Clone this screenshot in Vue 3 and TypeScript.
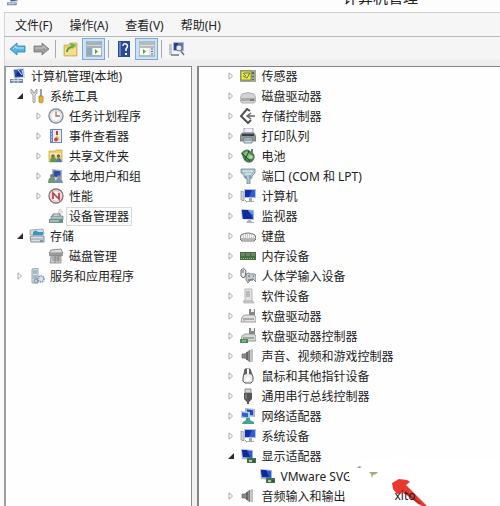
<script setup lang="ts">
interface Row {
  icon: string
  label: string
  level: number
  state?: 'open' | 'closed'
  selected?: boolean
}

const menus: string[] = ['文件(F)', '操作(A)', '查看(V)', '帮助(H)']

const consoleTree: Row[] = [
  { icon: 'console', label: '计算机管理(本地)', level: 0 },
  { icon: 'tools', label: '系统工具', level: 1, state: 'open' },
  { icon: 'clock', label: '任务计划程序', level: 2, state: 'closed' },
  { icon: 'event', label: '事件查看器', level: 2, state: 'closed' },
  { icon: 'shared', label: '共享文件夹', level: 2, state: 'closed' },
  { icon: 'users', label: '本地用户和组', level: 2, state: 'closed' },
  { icon: 'perf', label: '性能', level: 2, state: 'closed' },
  { icon: 'device', label: '设备管理器', level: 2, selected: true },
  { icon: 'storage', label: '存储', level: 1, state: 'open' },
  { icon: 'disk', label: '磁盘管理', level: 2 },
  { icon: 'services', label: '服务和应用程序', level: 1, state: 'closed' },
]

const deviceTree: Row[] = [
  { icon: 'sensor', label: '传感器', level: 1, state: 'closed' },
  { icon: 'drive', label: '磁盘驱动器', level: 1, state: 'closed' },
  { icon: 'controller', label: '存储控制器', level: 1, state: 'closed' },
  { icon: 'printer', label: '打印队列', level: 1, state: 'closed' },
  { icon: 'battery', label: '电池', level: 1, state: 'closed' },
  { icon: 'port', label: '端口 (COM 和 LPT)', level: 1, state: 'closed' },
  { icon: 'computer', label: '计算机', level: 1, state: 'closed' },
  { icon: 'monitor', label: '监视器', level: 1, state: 'closed' },
  { icon: 'keyboard', label: '键盘', level: 1, state: 'closed' },
  { icon: 'memory', label: '内存设备', level: 1, state: 'closed' },
  { icon: 'hid', label: '人体学输入设备', level: 1, state: 'closed' },
  { icon: 'software', label: '软件设备', level: 1, state: 'closed' },
  { icon: 'floppy', label: '软盘驱动器', level: 1, state: 'closed' },
  { icon: 'floppyctl', label: '软盘驱动器控制器', level: 1, state: 'closed' },
  { icon: 'speaker', label: '声音、视频和游戏控制器', level: 1, state: 'closed' },
  { icon: 'mouse', label: '鼠标和其他指针设备', level: 1, state: 'closed' },
  { icon: 'usb', label: '通用串行总线控制器', level: 1, state: 'closed' },
  { icon: 'network', label: '网络适配器', level: 1, state: 'closed' },
  { icon: 'computer', label: '系统设备', level: 1, state: 'closed' },
  { icon: 'display', label: '显示适配器', level: 1, state: 'open' },
  { icon: 'display', label: 'VMware SVG', level: 2 },
  { icon: 'speaker', label: '音频输入和输出', level: 1, state: 'closed' },
]
</script>

<template>
  <svg class="sprite" width="0" height="0" aria-hidden="true">
    <symbol id="i-open" viewBox="0 0 8 8"><path d="M7 1v6H1z" fill="#2b2b2b" /></symbol>
    <symbol id="i-closed" viewBox="0 0 8 8"><path d="M2 .8v6.4L5.6 4z" fill="#fff" stroke="#a6a6a6" /></symbol>
    <symbol id="i-console" viewBox="0 0 16 16">
      <path d="M3 1l11-1 1 10-11 1z" fill="#c9d2dc" /><path d="M4 2l9-.8.8 7.6L5 9.6z" fill="#2a55b8" />
      <path d="M5 8l3-5 5 5z" fill="#142f7b" /><path d="M8 2l4 5M12 2l2 7" stroke="#d7e5f5" />
      <path d="M0 11h13v4H0z" fill="#7c8ca5" /><path d="M1 12.500h11M4 11v4M8 11v4" stroke="#d0d8e4" />
    </symbol>
    <symbol id="i-tools" viewBox="0 0 16 16">
      <path d="M2 1v4l2 2v7q1 2 2 0V7l2-2V1L6 3v2H4V3z" fill="#e8ebee" stroke="#84898e" stroke-width=".8" />
      <path d="M11 1h2v7h-2z" fill="#9aa0a6" /><path d="M10 8h4v6q-2 2-4 0z" fill="#e3b32e" stroke="#a87d14" stroke-width=".7" />
    </symbol>
    <symbol id="i-clock" viewBox="0 0 16 16">
      <circle cx="8" cy="8" r="7" fill="#f4f8fc" stroke="#8b8b95" stroke-width="1.400" /><circle cx="8" cy="8" r="5.300" fill="none" stroke="#cbd8e6" />
      <path d="M8 3.500V8h4" fill="none" stroke="#ad7a3d" stroke-width="1.300" />
    </symbol>
    <symbol id="i-event" viewBox="0 0 16 16">
      <path d="M2 1h12v14H2z" fill="#6d87bd" /><path d="M5 2h8v12H5z" fill="#e8edf5" /><path d="M3 3h1M3 6h1M3 9h1M3 12h1" stroke="#fff" />
      <path d="M9 3v4" stroke="#c83a38" stroke-width="2" /><path d="M7 11l2-4 3 5z" fill="#edbd39" /><circle cx="8" cy="11.500" r="2" fill="#c64b43" />
    </symbol>
    <symbol id="i-shared" viewBox="0 0 16 16">
      <path d="M1 3h6l1-1h6v12H1z" fill="#edd16c" stroke="#c6a847" stroke-width=".7" /><path d="M2 5h11v3H2z" fill="#f8e9a7" />
      <circle cx="5" cy="8" r="1.800" fill="#8b6743" /><path d="M2 14q0-5 3-5t4 5z" fill="#5b9c54" />
      <circle cx="10.500" cy="8" r="1.700" fill="#765f4d" /><path d="M8 14q0-4 2.500-4t3.500 4z" fill="#4e78a8" />
    </symbol>
    <symbol id="i-users" viewBox="0 0 16 16">
      <path d="M4 1l10 1v9L4 10z" fill="#a6b8cc" /><path d="M5.500 2.500l7 .7v6l-7-.7z" fill="#284fad" />
      <circle cx="4" cy="8" r="2" fill="#7e7965" /><path d="M0 15q0-6 4-6t4 6z" fill="#71967c" />
      <circle cx="11" cy="9" r="1.800" fill="#b0916d" /><path d="M7 15q1-5 4-5t4 5z" fill="#738fb7" />
    </symbol>
    <symbol id="i-perf" viewBox="0 0 16 16">
      <circle cx="8" cy="8" r="7" fill="#fdf7f7" stroke="#856f75" stroke-width="1.300" /><circle cx="8" cy="8" r="5.200" fill="none" stroke="#d8bcc0" />
      <path d="M5 11V5l6 6V5" fill="none" stroke="#c1394a" stroke-width="1.700" />
    </symbol>
    <symbol id="i-device" viewBox="0 0 16 16">
      <path d="M10 5l2-4 3 3-3 2z" fill="#e5e8e8" stroke="#b1b5b4" stroke-width=".6" />
      <path d="M5 8V6h7v2" fill="none" stroke="#687477" /><path d="M3 8h12v4H3z" fill="#a8bfc2" stroke="#657c80" stroke-width=".7" />
      <path d="M1 11h14v4H1z" fill="#738d90" /><path d="M2 13h9" stroke="#dce6e6" /><path d="M12 13h2" stroke="#4ba667" stroke-width="2" />
    </symbol>
    <symbol id="i-storage" viewBox="0 0 16 16">
      <path d="M1 2l13-1 1 5-2 1H1z" fill="#d7dadb" stroke="#8d989f" stroke-width=".7" /><path d="M4 4q3-3 5 0h5v3H4z" fill="#329bc2" />
      <path d="M1 9l2-1h12v6H2z" fill="#dbe2e8" stroke="#687480" stroke-width=".8" /><path d="M2 11h12" stroke="#8f9ba8" /><path d="M11 13h3" stroke="#4b5c6b" />
    </symbol>
    <symbol id="i-disk" viewBox="0 0 16 16">
      <path d="M3 2l10-1 2 4H1z" fill="#dcdcdc" stroke="#777" stroke-width=".8" /><path d="M1 5h14v3H1z" fill="#999" />
      <path d="M3 8h10v7H2z" fill="#cfcfcf" stroke="#777" stroke-width=".7" /><path d="M4 10h8M4 12h8M7 8v7M10 8v6" stroke="#777" stroke-width=".8" />
    </symbol>
    <symbol id="i-services" viewBox="0 0 16 16">
      <path d="M3 1l6-1v15H3z" fill="#d9e3e9" stroke="#81929d" stroke-width=".8" /><path d="M4 3h4M4 5h4M4 8h4M4 10h4" stroke="#73909f" />
      <circle cx="12" cy="11" r="3" fill="#d8e4ec" stroke="#7b92a3" stroke-dasharray="1.500 .7" stroke-width="1.500" /><circle cx="7" cy="13" r="2" fill="#bdd0dc" stroke="#7b92a3" />
    </symbol>
    <symbol id="i-sensor" viewBox="0 0 16 16">
      <path d="M0 2h16v12H0z" fill="#a2a793" /><path d="M1 3h10v9H1z" fill="#e5e846" stroke="#6d7440" stroke-width=".7" />
      <path d="M4 5h6L7 10 3 8M3 5l3 3" fill="none" stroke="#637b45" /><path d="M13 4v2M13 8v1M13 11v1" stroke="#474b45" stroke-width="1.500" />
    </symbol>
    <symbol id="i-drive" viewBox="0 0 16 16">
      <path d="M2 6q6-3 12 0l2 4v3l-2 2H2l-2-2v-3z" fill="#d4d4d4" stroke="#9a9a9a" stroke-width=".7" /><path d="M1 10h14v3H1z" fill="#aaa" /><path d="M10 12h4" stroke="#555" />
    </symbol>
    <symbol id="i-controller" viewBox="0 0 16 16">
      <path d="M10 3L7 1 1 8l7 7 3-3" fill="none" stroke="#505050" stroke-width="2" /><path d="M15 8H7m4-3L7 8l4 3" fill="none" stroke="#666" stroke-width="1.400" />
    </symbol>
    <symbol id="i-printer" viewBox="0 0 16 16">
      <path d="M4 0h9v5H4z" fill="#edf1f5" stroke="#889" stroke-width=".7" /><path d="M2 5h12l2 4v4H0V8z" fill="#8d9699" stroke="#596267" stroke-width=".7" />
      <path d="M2 7h12" stroke="#353f45" stroke-width="2" /><path d="M4 10h8v5H4z" fill="#cfe1e2" stroke="#617578" stroke-width=".8" /><path d="M5 12h6" stroke="#54777d" />
    </symbol>
    <symbol id="i-battery" viewBox="0 0 16 16">
      <path d="M1 5q4-5 8-3l5 4q2 4-2 8-5 2-8-2z" fill="#467e51" /><path d="M3 5l4-2 5 5-4 4z" fill="#8cba76" />
      <path d="M2 5l8 8M9 3L5 12" stroke="#234d32" /><path d="M12 1v5" stroke="#6d7c70" stroke-width="2" /><circle cx="11" cy="9" r="2" fill="#b3d69b" />
    </symbol>
    <symbol id="i-port" viewBox="0 0 16 16">
      <path d="M1 1h14v4l-3 3v2l-2 1v5H7v-5L4 9V7L1 5z" fill="#abc6ce" stroke="#738990" stroke-width=".8" /><path d="M3 3h10M5 6h6" stroke="#eaf2f4" /><path d="M6 8v3M10 7v3" stroke="#667e85" />
    </symbol>
    <symbol id="i-computer" viewBox="0 0 16 16">
      <path d="M1 3l3 1v9l-3-1z" fill="#cdd4d3" stroke="#89908f" stroke-width=".7" /><path d="M4 1h12v9H4z" fill="#b1c2dd" />
      <path d="M5 2h10v7H5z" fill="#315fd3" /><path d="M5 2h7L9 9H5z" fill="#152fac" /><path d="M9 10h3v3h2v1H7v-1h2z" fill="#9cabb9" /><path d="M5 12l2 2" stroke="#70ac43" />
    </symbol>
    <symbol id="i-monitor" viewBox="0 0 16 16">
      <path d="M1 1l13 1v10L2 11z" fill="#a9bad0" /><path d="M2 2l11 1v8L3 10z" fill="#2857ca" /><path d="M2 2h6l5 9H3z" fill="#132b9c" />
      <path d="M8 3l5 4V3z" fill="#609be8" /><path d="M8 12h3l1 2h2v1H6z" fill="#a8b5bd" />
    </symbol>
    <symbol id="i-keyboard" viewBox="0 0 16 16">
      <path d="M1 7q7-4 14 0l1 4-2 2H2l-2-2z" fill="#f5f5f5" stroke="#6d6d6d" /><path d="M1 11h14" stroke="#777" /><path d="M3 7h10M3 9h11" stroke="#a4a4a4" stroke-dasharray="1 1" />
    </symbol>
    <symbol id="i-memory" viewBox="0 0 16 16">
      <path d="M0 4h16v8H0z" fill="#426f46" /><path d="M1 5h4v3H1zM6 5h4v3H6zM11 5h4v3h-4z" fill="#6e8666" /><path d="M1 10.500h14" stroke="#c5b957" stroke-dasharray="1 1" />
    </symbol>
    <symbol id="i-hid" viewBox="0 0 16 16">
      <path d="M1 2q3-3 5 1l-1 6q-2 2-4-1z" fill="#eee" stroke="#666" /><path d="M3 2v3" stroke="#555" />
      <path d="M6 6q3-2 5 0 3-1 5 1v7l-3-3h-2l-3 4-2-3z" fill="#c5ccd1" stroke="#6c747b" stroke-width=".8" /><path d="M8 8h2m3 0h1M8 12h5" stroke="#4f565c" />
    </symbol>
    <symbol id="i-software" viewBox="0 0 16 16">
      <path d="M5 1h7v12H5z" fill="#e3e3e3" stroke="#b5b5b5" /><path d="M6 3h4v6H6z" fill="#bbb" /><path d="M3 13h10l1 2H4z" fill="#ccc" stroke="#aaa" stroke-width=".7" />
    </symbol>
    <symbol id="i-floppy" viewBox="0 0 16 16">
      <path d="M9 1h6v7H9z" fill="#83868c" /><path d="M11 1h3v3h-3z" fill="#eee" /><path d="M2 9l3-2h9l2 2v5H1z" fill="#e1e1e1" stroke="#888" stroke-width=".8" /><path d="M3 11h11" stroke="#777" /><path d="M3 13h2" stroke="#aaa" />
    </symbol>
    <symbol id="i-floppyctl" viewBox="0 0 16 16">
      <path d="M9 0h6v7H9z" fill="#83868c" /><path d="M11 0h3v3h-3z" fill="#eee" /><path d="M2 8l3-2h9l2 2v5H1z" fill="#d5dad6" stroke="#7d8580" stroke-width=".8" /><path d="M3 10h11" stroke="#6a7770" /><path d="M0 11h8v4H0z" fill="#4f8d5b" /><path d="M2 13h4" stroke="#bcd6a3" />
    </symbol>
    <symbol id="i-speaker" viewBox="0 0 16 16">
      <path d="M2 6h3l5-4v12l-5-4H2z" fill="#8c8c8c" stroke="#646464" stroke-width=".7" /><path d="M7 4v8" stroke="#444" /><path d="M12 1v13" stroke="#c0c0c0" stroke-width="2" />
    </symbol>
    <symbol id="i-mouse" viewBox="0 0 16 16">
      <path d="M5 1h5l3 8q1 4-2 6H5q-3-1-2-5z" fill="#eee" stroke="#555" /><path d="M5 1h5l2 6q-4-2-8 0z" fill="#616161" /><path d="M8 1v5" stroke="#fff" stroke-width="2" /><circle cx="8" cy="11" r="2" fill="#fff" />
    </symbol>
    <symbol id="i-usb" viewBox="0 0 16 16">
      <path d="M5 1h6v4H5z" fill="#d5d5d5" stroke="#777" stroke-width=".8" /><path d="M4 5h8v6l-3 3v2H7v-2l-3-3z" fill="#555" /><path d="M6 6v5" stroke="#999" />
    </symbol>
    <symbol id="i-network" viewBox="0 0 16 16">
      <path d="M5 0l10 1v8L5 8z" fill="#a1b7d4" /><path d="M7 1.500l6 .7v5L7 6.500z" fill="#214bb5" /><path d="M1 3l9 1v7l-9-1z" fill="#b6c9dd" /><path d="M2 4.500l6 .7v4L2 8.500z" fill="#315fce" /><path d="M3 14l3-2v-2h4v2l4 2v2H2z" fill="#49a28e" />
    </symbol>
    <symbol id="i-display" viewBox="0 0 16 16">
      <path d="M1 1l12 1v10L2 11z" fill="#a3b5ce" /><path d="M2 2l10 1v7L3 9z" fill="#2958cf" /><path d="M2 2h5l3 7H3z" fill="#11279c" />
      <path d="M7 10h9v5H7z" fill="#407349" /><path d="M9 12h3v2H9z" fill="#b7caa6" /><path d="M13 13h2" stroke="#213e2b" />
    </symbol>
    <symbol id="i-back" viewBox="0 0 16 16"><path d="M0 8l7-6v3h8v6H7v3z" fill="#55b4e3" stroke="#347fac" stroke-width=".8" /><path d="M3 8l3-3v2h8" fill="none" stroke="#b5e5f8" /></symbol>
    <symbol id="i-forward" viewBox="0 0 16 16"><path d="M16 8L9 2v3H1v6h8v3z" fill="#9d9d9d" stroke="#777" stroke-width=".8" /><path d="M2 7h8V5l3 3" fill="none" stroke="#c7c7c7" /></symbol>
    <symbol id="i-up" viewBox="0 0 16 16"><path d="M1 4h5l1-2h7v13H1z" fill="#e9cd66" stroke="#c5a64c" stroke-width=".7" /><path d="M2 7h11v7H2z" fill="#f4df91" /><path d="M4 11q0-4 5-5" fill="none" stroke="#56a53c" stroke-width="2" /><path d="M7 2l6 2-4 4z" fill="#61b548" /></symbol>
    <symbol id="i-pane" viewBox="0 0 16 16"><path d="M0 1h16v14H0z" fill="#d1d9dc" stroke="#7c8d99" /><path d="M1 3h14M1 6h14" stroke="#7c8790" /><path d="M1 7h5v7H1z" fill="#8babbd" /><path d="M7 7h8v7H7z" fill="#fafcf7" /><path d="M9 8v5l3-2.500z" fill="#54a536" /></symbol>
    <symbol id="i-help" viewBox="0 0 16 16"><path d="M2 0h12v16H2z" fill="#2b4b9a" /><path d="M3 1h2v14H3z" fill="#6783be" /><path d="M7 5q0-3 3-2t0 5v2" fill="none" stroke="#fff" stroke-width="1.500" /><path d="M9 12h2v2H9z" fill="#fff" /></symbol>
    <symbol id="i-action" viewBox="0 0 16 16"><path d="M0 1h16v14H0z" fill="#dce2e4" stroke="#8899a3" /><path d="M1 3h14M1 6h14" stroke="#8b969d" /><path d="M1 7h9v7H1z" fill="#fafcf7" /><path d="M4 8v5l3-2.500z" fill="#54a536" /><path d="M12 8h2M12 10.500h2M12 13h2" stroke="#557a9d" /></symbol>
    <symbol id="i-scan" viewBox="0 0 16 16"><path d="M0 3h3v11H0z" fill="#bdc7cf" /><path d="M4 1h11v9H4z" fill="#aab7ce" /><path d="M5 2h9v7H5z" fill="#5d73b9" /><path d="M5 2h4v7H5z" fill="#233c92" /><circle cx="10" cy="7" r="3" fill="#e1eaf5" stroke="#66768d" /><path d="M12 10l3 4M2 14h8" stroke="#697785" stroke-width="1.500" /></symbol>
  </svg>

  <main class="window">
    <header class="titlebar">
      <svg class="app-icon" viewBox="0 0 16 16" aria-hidden="true"><use href="#i-console" /></svg>
      <h1 class="title">计算机管理</h1>
    </header>

    <nav class="menubar" aria-label="菜单">
      <button v-for="menu in menus" :key="menu" type="button" class="menu">{{ menu }}</button>
    </nav>

    <div class="toolbar" role="toolbar">
      <button type="button" class="tool" aria-label="后退"><svg class="icon"><use href="#i-back" /></svg></button>
      <button type="button" class="tool" aria-label="前进"><svg class="icon"><use href="#i-forward" /></svg></button>
      <span class="divider"></span>
      <button type="button" class="tool" aria-label="向上"><svg class="icon"><use href="#i-up" /></svg></button>
      <button type="button" class="tool pressed" aria-label="显示控制台树"><svg class="icon"><use href="#i-pane" /></svg></button>
      <span class="divider"></span>
      <button type="button" class="tool" aria-label="帮助"><svg class="icon"><use href="#i-help" /></svg></button>
      <button type="button" class="tool pressed" aria-label="显示操作窗格"><svg class="icon"><use href="#i-action" /></svg></button>
      <span class="divider"></span>
      <button type="button" class="tool" aria-label="扫描硬件改动"><svg class="icon"><use href="#i-scan" /></svg></button>
    </div>

    <div class="panes">
      <section class="pane console">
        <ul class="tree">
          <li v-for="row in consoleTree" :key="row.label" class="row" :class="'level-' + row.level">
            <span class="toggle"><svg v-if="row.state" class="arrow"><use :href="'#i-' + row.state" /></svg></span>
            <svg class="icon"><use :href="'#i-' + row.icon" /></svg>
            <span class="label" :class="{ selected: row.selected }">{{ row.label }}</span>
          </li>
        </ul>
      </section>

      <section class="pane devices">
        <ul class="tree">
          <li v-for="row in deviceTree" :key="row.label" class="row" :class="'level-' + row.level">
            <span class="toggle"><svg v-if="row.state" class="arrow"><use :href="'#i-' + row.state" /></svg></span>
            <svg class="icon"><use :href="'#i-' + row.icon" /></svg>
            <span class="label">{{ row.label }}</span>
          </li>
        </ul>
        <div class="overlay">
          <svg class="marks" viewBox="0 0 156 46" aria-hidden="true">
            <path d="M8 6Q3 12 6 22L1 28V46H156V0H20z" fill="#fefffe" />
            <path d="M13 8l2-2 3 1-2 1z" fill="#8fae86" />
            <path d="M25 12h9l-2 2-3 1-1 3-1-4z" fill="#9caf78" />
            <path d="M48 23l7-4 8 1 3 2-4 3 21 21h-5L60 33l-7 1-4-5z" fill="#e8382f" />
            <path d="M61 32l15 12" stroke="#b92524" stroke-width="2" />
          </svg>
          <span class="stamp">xito</span>
        </div>
      </section>
    </div>
  </main>
</template>

<style>
body {
  margin: 0;
  background: #fafafa;
}
</style>

<style scoped>
.sprite {
  position: absolute;
}

.window {
  display: flex;
  flex-direction: column;
  box-sizing: border-box;
  height: 100vh;
  padding-left: 4px;
  overflow: hidden;
  background: #fafafa;
  color: #222;
  font-family: "Noto Sans", "Noto Sans CJK SC", sans-serif;
  font-size: 12px;
}

.titlebar {
  display: flex;
  flex: none;
  align-items: flex-end;
  height: 6px;
  padding: 0 82px 6px 3px;
  overflow: hidden;
  border-bottom: 1px solid #cecece;
  background: #fdfdfd;
}

.app-icon {
  width: 12px;
  height: 12px;
}

.title {
  margin: 0 0 0 auto;
  font-size: 15px;
  font-weight: 400;
  line-height: 18px;
}

.menubar {
  display: flex;
  flex: none;
  gap: 17px;
  height: 23px;
  padding-left: 10px;
  border-bottom: 1px solid #b9b9b9;
  border-left: 1px solid #d4d4d4;
  background: #f6f6f7;
}

.menu {
  padding: 0;
  border: 0;
  background: none;
  color: inherit;
  font: inherit;
}

.toolbar {
  display: flex;
  flex: none;
  align-items: center;
  height: 24px;
  padding: 0 0 5px 1px;
  border-left: 1px solid #d4d4d4;
  background: linear-gradient(#f5f5f6 21px, #ededee 24px);
}

.tool {
  display: grid;
  place-items: center;
  box-sizing: border-box;
  width: 23px;
  height: 22px;
  padding: 0;
  border: 1px solid transparent;
  background: none;
}

.pressed {
  border-color: #79a9d6;
  background: #cbe2f6;
}

.divider {
  width: 1px;
  height: 18px;
  margin: 0 3px;
  background: #a9a9a9;
}

.icon {
  flex: none;
  width: 16px;
  height: 16px;
}

.panes {
  display: flex;
  flex: 1;
  gap: 5px;
  min-height: 0;
  background: #f1f1f1;
}

.pane {
  position: relative;
  box-sizing: border-box;
  overflow: hidden;
  border-top: 1px solid #858585;
  background: #fefefe;
}

.console {
  flex: 0 0 38%;
  border-right: 1px solid #8c8c8c;
  border-left: 2px solid #a0a0a0;
}

.devices {
  flex: 1;
  border-left: 2px solid #858585;
}

.tree {
  margin: -1px 0 0;
  padding: 0;
  list-style: none;
}

.row {
  display: flex;
  align-items: center;
  height: 20px;
  white-space: nowrap;
}

.toggle {
  display: flex;
  flex: none;
  width: 13px;
}

.arrow {
  width: 8px;
  height: 8px;
}

.level-0 {
  padding-left: 4px;
}

.level-0 .toggle {
  display: none;
}

.level-1 {
  padding-left: 10px;
}

.level-2 {
  padding-left: 29px;
}

.devices .level-1 {
  padding-left: 28px;
}

.devices .level-2 {
  padding-left: 47px;
}

.label {
  margin-left: 2px;
  padding: 0 2px;
  border: 1px solid transparent;
  line-height: 17px;
}

.selected {
  border-color: #d6dcdc;
  background: #fbfcfc;
}

.overlay {
  position: absolute;
  top: 393px;
  left: 145px;
  width: 156px;
  height: 46px;
}

.marks {
  display: block;
  width: 156px;
  height: 46px;
}

.stamp {
  position: absolute;
  top: 27px;
  left: 50px;
  line-height: 17px;
}
</style>
